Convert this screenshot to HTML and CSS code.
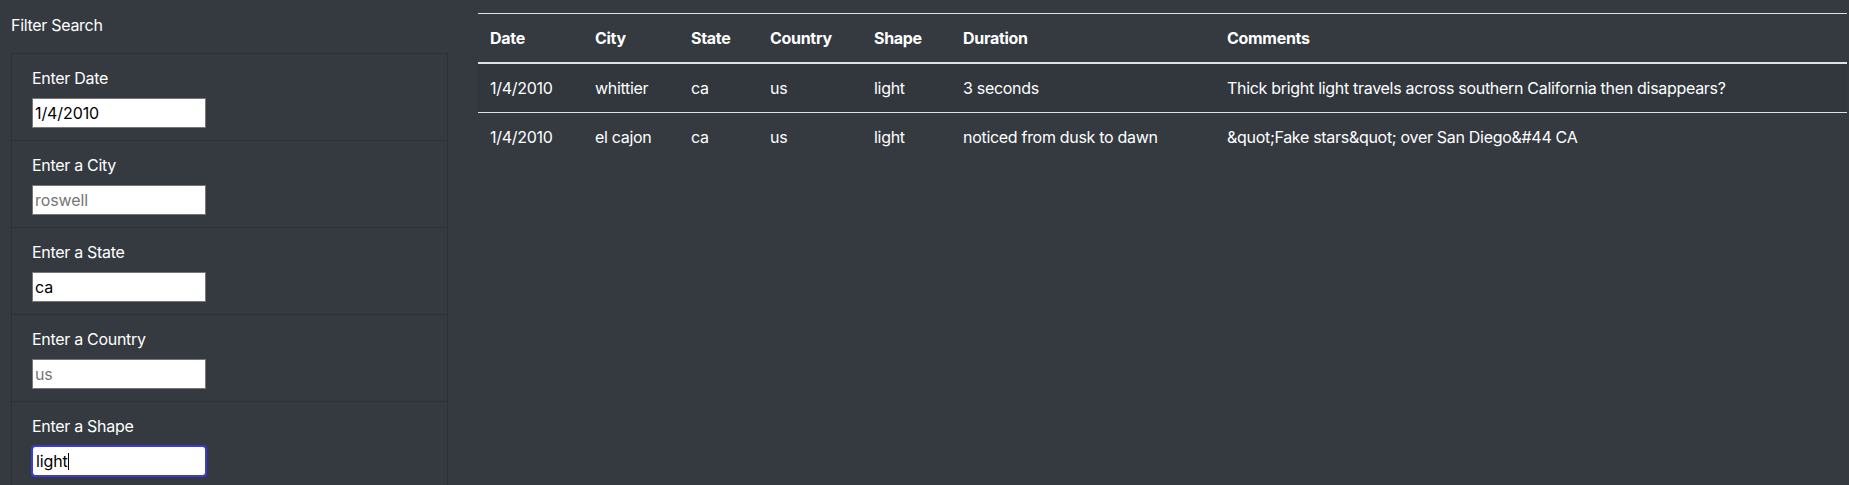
FILE: index.html
```html
<!DOCTYPE html>
<html lang="en">
<head>
<meta charset="utf-8">
<title>UFO Sightings</title>
<link rel="stylesheet" href="styles.css">
</head>
<body>
<div class="page">
  <aside class="filters">
    <h2 class="filters-title">Filter Search</h2>
    <ul class="filter-list">
      <li class="filter-item">
        <label class="filter-label" for="datetime">Enter Date</label>
        <input class="filter-input" id="datetime" type="text" value="1/4/2010">
      </li>
      <li class="filter-item">
        <label class="filter-label" for="city">Enter a City</label>
        <input class="filter-input" id="city" type="text" placeholder="roswell">
      </li>
      <li class="filter-item">
        <label class="filter-label" for="state">Enter a State</label>
        <input class="filter-input" id="state" type="text" value="ca">
      </li>
      <li class="filter-item">
        <label class="filter-label" for="country">Enter a Country</label>
        <input class="filter-input" id="country" type="text" placeholder="us">
      </li>
      <li class="filter-item">
        <label class="filter-label" for="shape">Enter a Shape</label>
        <div class="input-wrap">
          <input class="filter-input is-focused" id="shape" type="text" value="light">
          <span class="caret"></span>
        </div>
      </li>
    </ul>
  </aside>
  <main class="results">
    <table class="ufo-table">
      <colgroup>
        <col class="c-date">
        <col class="c-city">
        <col class="c-state">
        <col class="c-country">
        <col class="c-shape">
        <col class="c-duration">
        <col class="c-comments">
      </colgroup>
      <thead>
        <tr>
          <th>Date</th>
          <th>City</th>
          <th>State</th>
          <th>Country</th>
          <th>Shape</th>
          <th>Duration</th>
          <th>Comments</th>
        </tr>
      </thead>
      <tbody>
        <tr>
          <td>1/4/2010</td>
          <td>whittier</td>
          <td>ca</td>
          <td>us</td>
          <td>light</td>
          <td>3 seconds</td>
          <td>Thick bright light travels across southern California then disappears?</td>
        </tr>
        <tr>
          <td>1/4/2010</td>
          <td>el cajon</td>
          <td>ca</td>
          <td>us</td>
          <td>light</td>
          <td>noticed from dusk to dawn</td>
          <td>&amp;quot;Fake stars&amp;quot; over San Diego&amp;#44 CA</td>
        </tr>
      </tbody>
    </table>
  </main>
</div>
</body>
</html>
```

FILE: styles.css
```css
html, body {
  margin: 0;
  padding: 0;
  background: #343a40;
  color: #fff;
  font-family: Inter, "Noto Sans", "Liberation Sans", sans-serif;
  font-size: 16px;
  line-height: 24px;
  letter-spacing: -0.3px;
}

.page {
  display: flex;
  align-items: flex-start;
  gap: 30px;
  padding: 0 2px 0 11px;
}

.filters {
  flex: 0 0 437px;
  width: 437px;
}

.filters-title {
  margin: 0 0 14px;
  padding-top: 11px;
  font-size: 16px;
  font-weight: 400;
  line-height: 28px;
}

.filter-list {
  list-style: none;
  margin: 0;
  padding: 0;
  border-left: 1px solid rgba(0, 0, 0, 0.14);
  border-right: 1px solid rgba(0, 0, 0, 0.14);
}

.filter-item {
  display: flex;
  flex-direction: column;
  align-items: flex-start;
  padding: 12px 20px;
  border-top: 1px solid rgba(0, 0, 0, 0.14);
}

.filter-label {
  display: block;
  margin-bottom: 8px;
  color: #fff;
}

.filter-input {
  box-sizing: border-box;
  width: 174px;
  height: 30px;
  margin: 0;
  padding: 1px 2px;
  border: 1px solid #767676;
  border-radius: 0;
  background: #fff;
  color: #000;
  font-family: inherit;
  font-size: 16px;
  letter-spacing: -0.1px;
  outline: none;
}

.filter-input::placeholder {
  color: #757575;
}

.filter-input.is-focused {
  padding-left: 3px;
  border-radius: 3px;
  outline: 2px solid #3b3cd2;
  outline-offset: -1px;
}

.input-wrap {
  position: relative;
}

.caret {
  position: absolute;
  left: 36px;
  top: 7px;
  width: 1px;
  height: 17px;
  background: #000;
}

.results {
  flex: 1 1 auto;
  min-width: 0;
  padding-top: 13px;
}

.ufo-table {
  width: 100%;
  table-layout: fixed;
  border-collapse: collapse;
  color: #fff;
}

.c-date { width: 105px; }
.c-city { width: 96px; }
.c-state { width: 79px; }
.c-country { width: 104px; }
.c-shape { width: 89px; }
.c-duration { width: 264px; }
.c-comments { width: 632px; }

.ufo-table th,
.ufo-table td {
  padding: 12px;
  text-align: left;
  vertical-align: top;
  border-top: 1px solid #dee2e6;
  white-space: nowrap;
}

.ufo-table th {
  font-weight: 700;
  border-bottom: 2px solid #dee2e6;
}

.ufo-table tbody tr:nth-child(odd) {
  background: rgba(0, 0, 0, 0.05);
}
```
